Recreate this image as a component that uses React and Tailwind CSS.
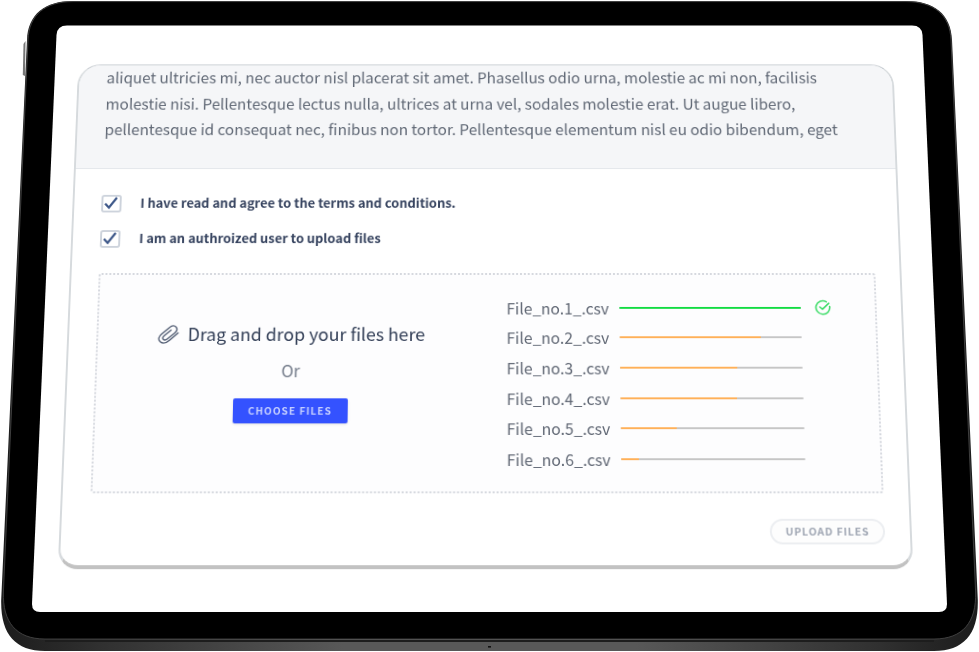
import React from "react";

const FILES = [
  { name: "File_no.1_.csv", progress: 100 },
  { name: "File_no.2_.csv", progress: 78 },
  { name: "File_no.3_.csv", progress: 64.5 },
  { name: "File_no.4_.csv", progress: 64 },
  { name: "File_no.5_.csv", progress: 31 },
  { name: "File_no.6_.csv", progress: 10 },
];

function TabletBody() {
  return (
    <svg className="absolute inset-0" width="979" height="652" viewBox="0 0 979 652">
      <defs>
        <linearGradient id="edge" x1="0" x2="1" y1="0" y2="0">
          <stop offset="0" stopColor="#1c1c1c" />
          <stop offset="0.1" stopColor="#303030" />
          <stop offset="0.35" stopColor="#585858" />
          <stop offset="0.65" stopColor="#585858" />
          <stop offset="0.9" stopColor="#303030" />
          <stop offset="1" stopColor="#1c1c1c" />
        </linearGradient>
      </defs>
      <path d="M25.5 41 L23.5 44 L22.8 75 L25 76 Z" fill="#777" />
      <path
        d="M73 1 H906 C934 1 951 14 952 40 L977.8 600 C978.5 634 964 651 934 651 H45 C15 651 0.5 634 1.2 600 L27 40 C28 14 45 1 73 1 Z"
        fill="url(#edge)"
      />
      <path
        d="M73 1.6 H906 C934 1.6 950 15 951 40 L975.6 592 C976.5 622 963 639 934 639 H45 C16 639 2.5 622 3.4 592 L28 40 C29 15 45 1.6 73 1.6 Z"
        fill="#000"
        stroke="#4a4a4a"
        strokeWidth="0.8"
      />
      <path d="M45 641 H934" stroke="#1d1d1d" strokeWidth="2" />
      <path
        d="M67 25.5 H912 Q922 25.500 922.500 35 L947 604 Q947 612 939 612 H40 Q32 612 32 604 L56.500 35 Q57 25.500 67 25.500 Z"
        fill="#fff"
      />
      <rect x="488" y="646" width="3" height="1.6" fill="#111" />
    </svg>
  );
}

function Checkbox({ label }) {
  return (
    <label className="flex h-[38px] items-center">
      <span className="flex h-[19px] w-[21px] items-center justify-center rounded-[3px] border-2 border-[#cdd3dc] bg-white">
        <svg width="14" height="14" viewBox="0 0 14 14" fill="none" stroke="#3c5688" strokeWidth="2.3">
          <path d="M1 7.500 L5 11.800 L13 1" />
        </svg>
      </span>
      <span className="ml-[20px] text-[13.350px] font-bold text-[#36435f]">{label}</span>
    </label>
  );
}

function PaperclipIcon() {
  return (
    <svg width="22" height="22" viewBox="0 0 22 22" fill="none" stroke="#4a566d" strokeWidth="1.3" strokeLinecap="round" strokeLinejoin="round">
      <path d="M20.800 9.500 L12.500 17 C9.500 19.700 5.700 21.300 2.700 18.800 C0 16.300 1 13.300 3.800 10.800 L11.300 4.200 C13.700 2 16.600 1.200 18.500 3.200 C20.300 5.200 19.600 7.500 17.400 9.500 L10 15.800 C8.500 17.100 6.900 17.400 5.800 16.200 C4.700 15 5.100 13.700 6.500 12.400 L13.500 6.400" />
    </svg>
  );
}

function DoneIcon() {
  return (
    <svg className="ml-[14px]" width="17" height="17" viewBox="0 0 17 17" fill="none" stroke="#3ddc68" strokeWidth="1.6" strokeLinecap="round" strokeLinejoin="round">
      <path d="M15.600 7.500 A7.100 7.100 0 1 1 12.300 2.600" />
      <path d="M5.500 8 L8.200 10.400 L14.800 4.200" />
    </svg>
  );
}

function FileRow({ file }) {
  const done = file.progress === 100;
  return (
    <li className="flex h-[31.640px] items-center">
      <span className="w-[115.500px] text-[16px] text-[#5f6673]">{file.name}</span>
      <span className="h-[2px] w-[187px] rounded-full bg-[#c6c6c6]">
        <span
          className={done ? "block h-full rounded-full bg-[#12dc42]" : "block h-full rounded-l-full bg-[#ffb058]"}
          style={{ width: `${file.progress}%` }}
        />
      </span>
      {done && <DoneIcon />}
    </li>
  );
}

export default function App() {
  return (
    <div className="relative flex h-[652px] w-[979px] items-end justify-center overflow-hidden bg-white pb-10 font-['Noto_Sans_CJK_SC','Noto_Sans',sans-serif]">
      <TabletBody />
      <main className="relative flex h-[620px] w-[915px] shrink-0 origin-bottom flex-col pl-6 pt-[43px] [transform:matrix3d(1,0,0,0,0,1,0,-0.0000932,0,0,1,0,0,0,0,1)]">
        <section className="flex h-[534px] w-[859px] flex-col overflow-hidden rounded-t-[24px] rounded-b-[20px] border-x-2 border-t border-b-4 border-x-[#d6dadd] border-t-[#c8cdd2] border-b-[#c2c2c2] bg-white">
          <div className="h-[114px] shrink-0 whitespace-nowrap border-b border-[#e3e6ea] bg-[#f5f6f8] pl-[28.500px] text-[15.960px] leading-[28.650px] text-[#606875]">
            <div className="-mt-px">
              <p>aliquet ultricies mi, nec auctor nisl placerat sit amet. Phasellus odio urna, molestie ac mi non, facilisis</p>
              <p>molestie nisi. Pellentesque lectus nulla, ultrices at urna vel, sodales molestie erat. Ut augue libero,</p>
              <p>pellentesque id consequat nec, finibus non tortor. Pellentesque elementum nisl eu odio bibendum, eget</p>
            </div>
          </div>
          <div className="flex flex-col pl-[27.500px] pt-[18px]">
            <Checkbox label="I have read and agree to the terms and conditions." />
            <Checkbox label="I am an authroized user to upload files" />
          </div>
          <div className="ml-[28px] mt-[18px] flex h-[230px] w-[802px] shrink-0 rounded-[3px] border-2 border-dotted border-[#d5d8de] bg-[#fdfdfe]">
            <div className="flex w-[396px] flex-col items-center pt-[47px]">
              <div className="flex h-8 items-center gap-[9px]">
                <PaperclipIcon />
                <span className="whitespace-nowrap text-[18.150px] text-[#344058]">Drag and drop your files here</span>
              </div>
              <span className="mt-[6px] h-8 text-[17px] leading-8 text-[#757d8b]">Or</span>
              <button className="mt-[13px] h-[26px] w-[117px] rounded-[2px] bg-[#3452ff] text-[10.300px] font-bold tracking-[1px] text-[#c6d0ff] shadow-sm">
                CHOOSE FILES
              </button>
            </div>
            <ul className="pl-[23px] pt-[19px]">
              {FILES.map((file) => (
                <FileRow key={file.name} file={file} />
              ))}
            </ul>
          </div>
          <button className="ml-auto mr-[25px] mt-[26px] h-[26px] w-[116px] shrink-0 rounded-full border-2 border-[#eceef1] bg-[#fdfdfd] text-[10.700px] font-bold tracking-[0.800px] text-[#9fa6b3]">
            UPLOAD FILES
          </button>
        </section>
      </main>
    </div>
  );
}
